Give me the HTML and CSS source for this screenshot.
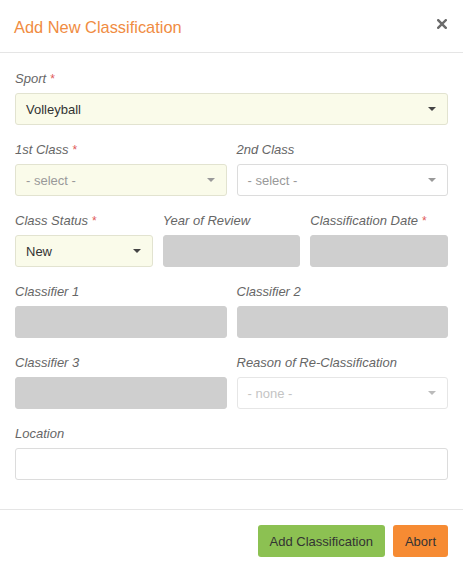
FILE: index.html
```html
<!DOCTYPE html>
<html lang="en">
<head>
<meta charset="utf-8">
<title>Add New Classification</title>
<link rel="stylesheet" href="styles.css">
</head>
<body>
<div class="modal">
  <div class="modal-header">
    <h4 class="modal-title">Add New Classification</h4>
    <span class="close" aria-label="Close">
      <svg width="10" height="10" viewBox="0 0 10 10"><path d="M1.2 1.2 L8.8 8.8 M8.8 1.2 L1.2 8.8" stroke="#6b6b6b" stroke-width="2.4" stroke-linecap="square"/></svg>
    </span>
  </div>
  <div class="modal-body">
    <div class="row cols-1">
      <div class="group">
        <label class="lbl">Sport <span class="req">*</span></label>
        <div class="field select req-bg">Volleyball<span class="caret"></span></div>
      </div>
    </div>
    <div class="row cols-2">
      <div class="group">
        <label class="lbl">1st Class <span class="req">*</span></label>
        <div class="field select req-bg placeholder">- select -<span class="caret light"></span></div>
      </div>
      <div class="group">
        <label class="lbl">2nd Class</label>
        <div class="field select placeholder">- select -<span class="caret light"></span></div>
      </div>
    </div>
    <div class="row cols-3">
      <div class="group">
        <label class="lbl">Class Status <span class="req">*</span></label>
        <div class="field select req-bg">New<span class="caret"></span></div>
      </div>
      <div class="group">
        <label class="lbl">Year of Review</label>
        <div class="field disabled"></div>
      </div>
      <div class="group">
        <label class="lbl">Classification Date <span class="req">*</span></label>
        <div class="field disabled"></div>
      </div>
    </div>
    <div class="row cols-2">
      <div class="group">
        <label class="lbl">Classifier 1</label>
        <div class="field disabled"></div>
      </div>
      <div class="group">
        <label class="lbl">Classifier 2</label>
        <div class="field disabled"></div>
      </div>
    </div>
    <div class="row cols-2">
      <div class="group">
        <label class="lbl">Classifier 3</label>
        <div class="field disabled"></div>
      </div>
      <div class="group">
        <label class="lbl">Reason of Re-Classification</label>
        <div class="field select muted">- none -<span class="caret faint"></span></div>
      </div>
    </div>
    <div class="row cols-1">
      <div class="group">
        <label class="lbl">Location</label>
        <div class="field"></div>
      </div>
    </div>
  </div>
  <div class="modal-footer">
    <button class="btn btn-green">Add Classification</button>
    <button class="btn btn-orange">Abort</button>
  </div>
</div>
</body>
</html>
```
FILE: styles.css
```css
* { box-sizing: border-box; }
html, body { margin: 0; padding: 0; background: #fff; }
body {
  font-family: "Liberation Sans", Arial, sans-serif;
  font-size: 13px;
  color: #333;
  width: 463px;
}
.modal { width: 463px; }
.modal-header {
  height: 53px;
  border-bottom: 1px solid #e5e5e5;
  display: flex;
  align-items: center;
  justify-content: space-between;
  padding: 0 16px 0 14px;
}
.modal-title {
  margin: 0;
  font-size: 16.4px;
  font-weight: normal;
  color: #f08c42;
  line-height: 20px;
  padding-top: 1px;
}
.close {
  display: flex;
  width: 10px;
  height: 10px;
  margin-top: -4px;
}
.modal-body {
  padding: 17px 15px 13px 15px;
}
.row {
  display: grid;
  column-gap: 10px;
  margin-bottom: 16px;
}
.cols-1 { grid-template-columns: 1fr; }
.cols-2 { grid-template-columns: 1fr 1fr; }
.cols-3 { grid-template-columns: 1fr 1fr 1fr; }
.group { display: flex; flex-direction: column; min-width: 0; }
.lbl {
  display: block;
  font-style: italic;
  color: #666;
  font-size: 13px;
  line-height: 18px;
  margin-bottom: 5px;
  white-space: nowrap;
}
.req { color: #e05a5a; font-size: 12px; }
.field {
  position: relative;
  height: 32px;
  border: 1px solid #dcdcdc;
  border-radius: 3px;
  background: #fff;
  padding: 0 10px;
  display: flex;
  align-items: center;
  font-size: 13px;
  color: #333;
}
.req-bg { background: #fafbea; border-color: #e2e3d0; }
.placeholder { color: #999; }
.muted { color: #c4c4c4; border-color: #e6e6e6; }
.disabled { background: #cfcfcf; border-color: #cfcfcf; }
.caret {
  position: absolute;
  right: 11px;
  top: 50%;
  margin-top: -2px;
  width: 0;
  height: 0;
  border-left: 4px solid transparent;
  border-right: 4px solid transparent;
  border-top: 4px solid #444;
}
.caret.light { border-top-color: #999; }
.caret.faint { border-top-color: #bbb; }
.modal-footer {
  border-top: 1px solid #e5e5e5;
  padding: 15px 15px 15px 15px;
  display: flex;
  justify-content: flex-end;
  gap: 8px;
}
.btn {
  height: 32px;
  border: 0;
  border-radius: 3px;
  padding: 0 12px;
  font-family: "Liberation Sans", Arial, sans-serif;
  font-size: 13px;
  color: #333;
  cursor: pointer;
}
.btn-green { background: #8cc152; }
.btn-orange { background: #f68b33; }
```
